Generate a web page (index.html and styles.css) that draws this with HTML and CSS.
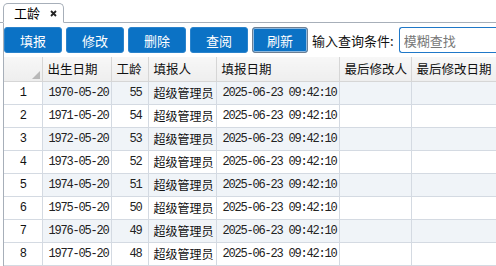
FILE: index.html
```html
<!DOCTYPE html>
<html lang="zh-CN">
<head>
    <meta charset="UTF-8">
    <title>工龄</title>
    <link rel="stylesheet" href="styles.css">
</head>
<body>
    <div class="tabs">
        <div class="tab">
            <span class="tab-title">工龄</span>
            <svg class="tab-close" width="7" height="7" viewBox="0 0 7 7"><path d="M1 1L6 6M6 1L1 6" stroke="#222" stroke-width="1.8"/></svg>
        </div>
    </div>
    <div class="panel">
        <div class="toolbar">
            <button class="btn">填报</button>
            <button class="btn">修改</button>
            <button class="btn">删除</button>
            <button class="btn">查阅</button>
            <button class="btn focused">刷新</button>
            <label class="search-label" for="kw">输入查询条件:</label>
            <input class="search" id="kw" type="text" placeholder="模糊查找">
        </div>
        <table class="grid">
            <colgroup>
                <col style="width: 38px">
                <col style="width: 69px">
                <col style="width: 37px">
                <col style="width: 68px">
                <col style="width: 123px">
                <col style="width: 72px">
                <col style="width: 95px">
            </colgroup>
            <thead>
                <tr>
                    <th class="corner"><svg width="8" height="8" viewBox="0 0 8 8"><polygon points="8,0 8,8 0,8" fill="#b8b8b8"/></svg></th>
                    <th>出生日期</th>
                    <th>工龄</th>
                    <th>填报人</th>
                    <th>填报日期</th>
                    <th>最后修改人</th>
                    <th>最后修改日期</th>
                </tr>
            </thead>
            <tbody id="rows"></tbody>
        </table>
    </div>

    <script>
        const tbody = document.getElementById('rows');
        for (let i = 0; i < 8; i++) {
            const tr = document.createElement('tr');
            tr.innerHTML =
                '<td class="num">' + (i + 1) + '</td>' +
                '<td class="mono">' + (1970 + i) + '-05-20</td>' +
                '<td class="mono right">' + (55 - i) + '</td>' +
                '<td>超级管理员</td>' +
                '<td class="mono">2025-06-23 09:42:10</td>' +
                '<td></td><td></td>';
            tbody.appendChild(tr);
        }
    </script>
</body>
</html>
```

FILE: styles.css
```css
body {
    margin: 0;
    background: #fff;
    font-family: "Noto Sans CJK SC", "Noto Sans", sans-serif;
    font-size: 12px;
    color: #111;
    overflow: hidden;
}
.tabs {
    height: 22px;
    padding-left: 3px;
    border-bottom: 1px solid #a7afb9;
    display: flex;
    align-items: flex-end;
}
.tab {
    width: 61px;
    height: 20px;
    margin-bottom: -1px;
    box-sizing: border-box;
    border: 1px solid #a7afb9;
    border-bottom: 1px solid #fff;
    border-radius: 5px 5px 0 0;
    background: #fff;
    display: flex;
    align-items: center;
    padding-left: 10px;
}
.tab-title {
    font-size: 13px;
    line-height: 16px;
    color: #000;
}
.tab-close {
    margin-left: 10px;
}
.panel {
    margin-left: 3px;
    border-left: 1px solid #a7afb9;
    height: 243px;
}
.toolbar {
    display: flex;
    align-items: center;
    gap: 4px;
    padding-top: 4px;
    white-space: nowrap;
}
.btn {
    flex-shrink: 0;
    width: 58px;
    height: 26px;
    background: #0b72c5;
    color: #fff;
    border: 1px solid #2a83cc;
    border-radius: 3px;
    font-family: "Noto Sans CJK SC", sans-serif;
    font-size: 13px;
    padding: 0;
}
.btn.focused {
    width: 56px;
    border: 1px solid #6e7f92;
    box-shadow: inset 0 0 0 1px #8fb9de;
}
.search-label {
    flex-shrink: 0;
    font-size: 13px;
    color: #111;
}
.search {
    flex: 1;
    min-width: 0;
    height: 26px;
    box-sizing: border-box;
    border: 1px solid #1f78c8;
    border-radius: 3px 0 0 3px;
    border-right: none;
    padding: 0 4px;
    font-family: "Noto Sans CJK SC", sans-serif;
    font-size: 13px;
    margin-left: 1px;
}
.search::placeholder {
    color: #777;
}
.grid {
    margin-top: 4px;
    border-collapse: collapse;
    table-layout: fixed;
    width: 502px;
}
.grid th, .grid td {
    height: 22px;
    padding: 0 5px;
    border: 1px solid #d4dae2;
    white-space: nowrap;
    overflow: hidden;
    text-align: left;
    font-size: 12px;
    line-height: 16px;
}
.grid th {
    font-weight: normal;
    font-size: 12.5px;
    background: linear-gradient(#f7f7f7, #eeeeee);
    border-color: #d6d6d6;
    border-top: none;
}
.grid th:first-child, .grid td:first-child {
    border-left: none;
}
.grid th.corner {
    text-align: right;
    vertical-align: bottom;
    padding: 0 2px 2px 0;
    line-height: 0;
}
.grid tbody tr:nth-child(odd) td {
    background: #f0f4f8;
}
.grid tbody tr td.num {
    background: #fff;
    text-align: center;
    font-family: "Liberation Mono", monospace;
    letter-spacing: -1px;
}
.grid td.mono {
    font-family: "Liberation Mono", monospace;
    font-size: 12px;
    letter-spacing: -1.2px;
    color: #222;
    padding-left: 6px;
}
.grid td.right {
    text-align: right;
    padding-right: 6px;
}
```
